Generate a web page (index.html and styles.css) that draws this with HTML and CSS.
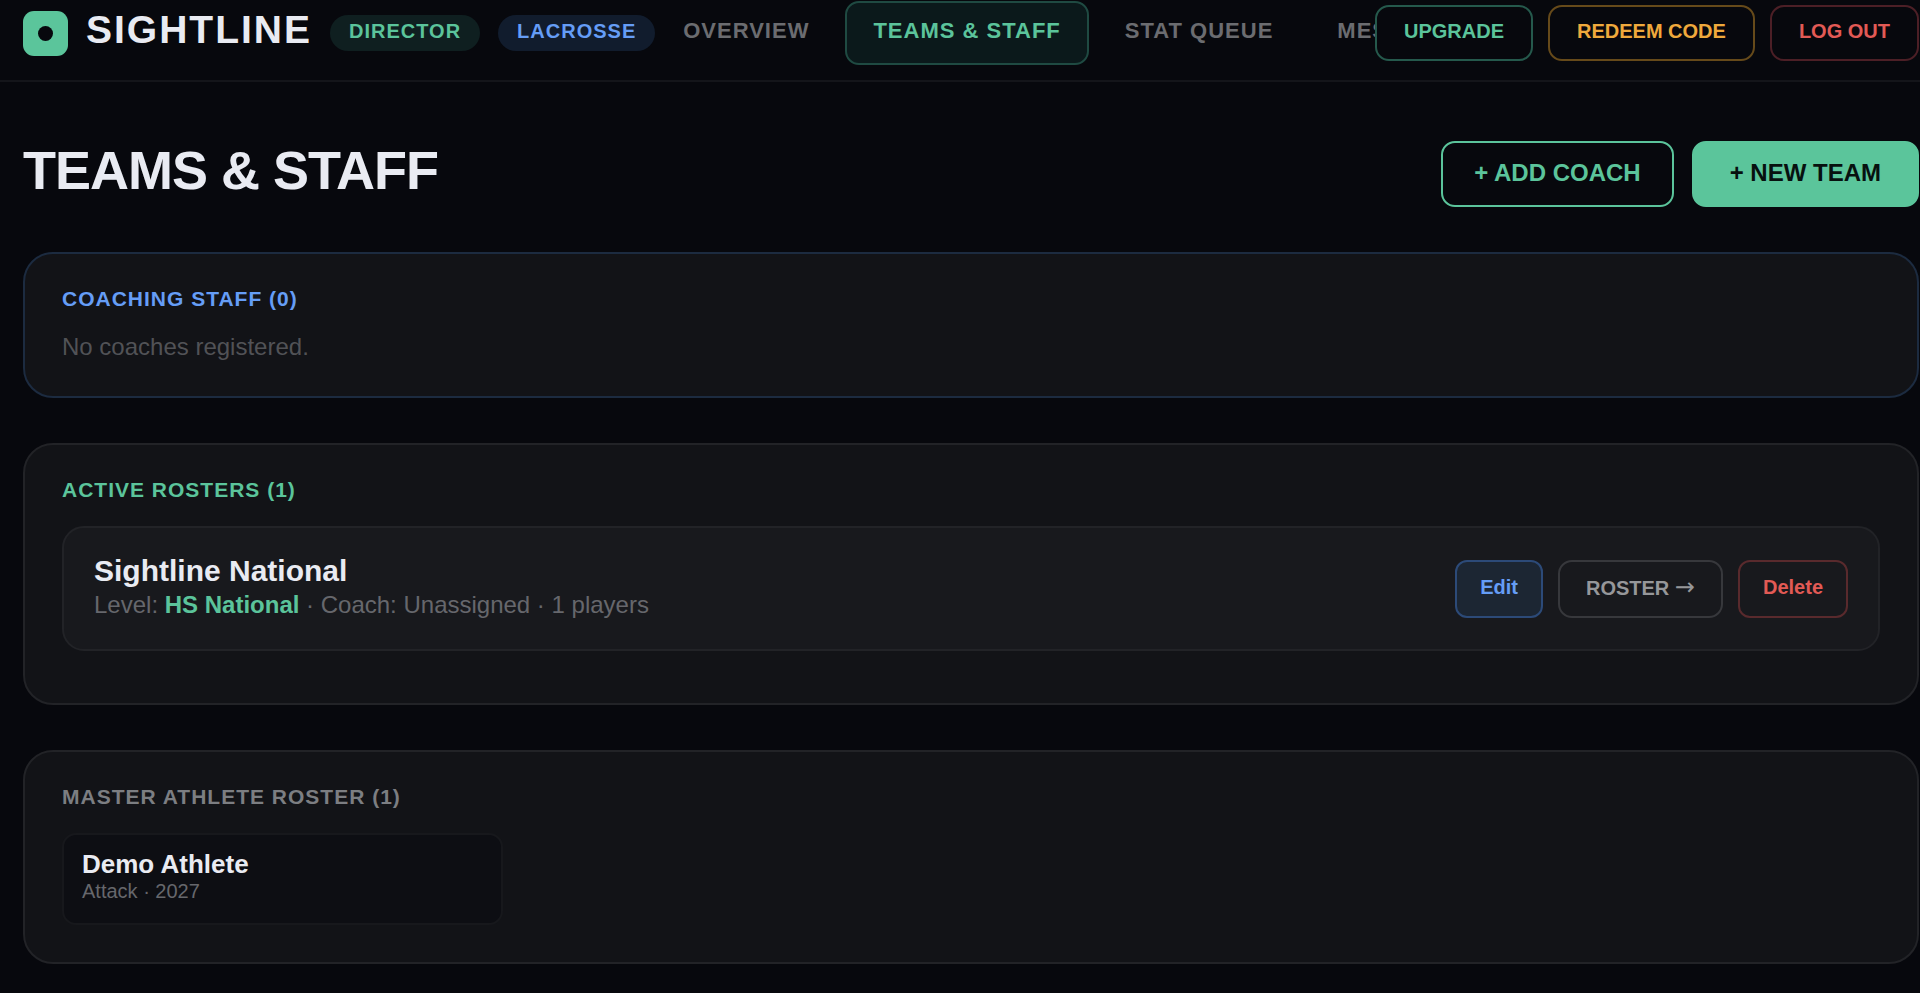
FILE: index.html
```html
<!DOCTYPE html>
<html lang="en">
  <head>
    <meta charset="utf-8" />
    <meta name="viewport" content="width=device-width, initial-scale=1" />
    <title>Sightline - Teams &amp; Staff</title>
    <link rel="stylesheet" href="styles.css">
  </head>

  <body>
    <header class="topbar">
      <div class="brand">
        <svg class="logo" viewBox="0 0 45 45" aria-hidden="true">
          <rect width="45" height="45" rx="11" fill="#5bc59b" />
          <circle cx="22.5" cy="22.5" r="7.5" fill="#07080d" />
        </svg>
        <span class="brand-name">SIGHTLINE</span>
        <span class="pill pill-green">DIRECTOR</span>
        <span class="pill pill-blue">LACROSSE</span>
      </div>
      <nav class="tabs">
        <a class="tab" href="#">OVERVIEW</a>
        <a class="tab active" href="#">TEAMS &amp; STAFF</a>
        <a class="tab" href="#">STAT QUEUE</a>
        <a class="tab" href="#">MESSAGES</a>
      </nav>
      <div class="account">
        <button class="btn btn-upgrade">UPGRADE</button>
        <button class="btn btn-redeem">REDEEM CODE</button>
        <button class="btn btn-logout">LOG OUT</button>
      </div>
    </header>

    <main class="main">
      <div class="page-head">
        <h1>TEAMS &amp; STAFF</h1>
        <div class="page-actions">
          <button class="btn btn-large btn-outline">+ ADD COACH</button>
          <button class="btn btn-large btn-solid">+ NEW TEAM</button>
        </div>
      </div>

      <section class="card card-staff">
        <h2 class="blue">COACHING STAFF (0)</h2>
        <p class="empty">No coaches registered.</p>
      </section>

      <section class="card">
        <h2 class="green">ACTIVE ROSTERS (1)</h2>
        <div class="team">
          <div class="team-info">
            <h3>Sightline National</h3>
            <p>Level: <strong>HS National</strong> · Coach: Unassigned · 1 players</p>
          </div>
          <div class="team-actions">
            <button class="btn btn-edit">Edit</button>
            <button class="btn btn-roster">ROSTER <span class="arrow">→</span></button>
            <button class="btn btn-delete">Delete</button>
          </div>
        </div>
      </section>

      <section class="card">
        <h2 class="grey">MASTER ATHLETE ROSTER (1)</h2>
        <div class="athletes">
          <div class="athlete">
            <h3>Demo Athlete</h3>
            <p>Attack · 2027</p>
          </div>
        </div>
      </section>
    </main>
  </body>
</html>
```
FILE: styles.css
```css
* {
  box-sizing: border-box;
}

body {
  margin: 0;
  background-color: #07080d;
  color: #e9ebf2;
  font-family: "Liberation Sans", Arial, Helvetica, sans-serif;
}

h1,
h2,
h3,
p {
  margin: 0;
}

/* top bar */
.topbar {
  display: flex;
  align-items: center;
  padding: 1px 1px 15px 23px;
  border-bottom: 2px solid #14151a;
}

.brand {
  display: flex;
  align-items: center;
  gap: 18px;
  flex-shrink: 0;
}

.logo {
  width: 45px;
  height: 45px;
}

.brand-name {
  padding-bottom: 7px;
  font-size: 39px;
  line-height: 40px;
  font-weight: bold;
  letter-spacing: 2px;
}

.pill {
  padding: 6px 19px 10px;
  border-radius: 18px;
  font-size: 20px;
  line-height: 20px;
  font-weight: bold;
  letter-spacing: 1px;
}

.pill-green {
  background-color: #0f1f20;
  color: #5bc49b;
}

.pill-blue {
  background-color: #111c2d;
  color: #659df6;
}

.tabs {
  display: flex;
  gap: 8px;
  flex: 1;
  min-width: 0;
  overflow: hidden;
}

.tab {
  flex-shrink: 0;
  padding: 17px 26px 21px;
  border: 2px solid transparent;
  border-radius: 14px;
  color: #6b6c70;
  font-size: 22px;
  line-height: 22px;
  font-weight: bold;
  letter-spacing: 1px;
  text-decoration: none;
}

.tab.active {
  background-color: #0b191b;
  border-color: #1f4a42;
  color: #5bc49b;
}

.account {
  display: flex;
  gap: 15px;
  flex-shrink: 0;
}

/* buttons */
.btn {
  padding: 14px 27px 18px;
  background-color: transparent;
  border: 2px solid;
  border-radius: 14px;
  font-family: inherit;
  font-size: 20px;
  line-height: 20px;
  font-weight: bold;
  white-space: nowrap;
  cursor: pointer;
}

.btn-upgrade {
  border-color: #25594c;
  color: #5bc49b;
}

.btn-redeem {
  border-color: #664a1a;
  color: #efa93c;
}

.btn-logout {
  border-color: #4c1f26;
  color: #e25a55;
}

.btn-large {
  padding: 18px 31px 20px;
  font-size: 24px;
  line-height: 24px;
}

.btn-outline {
  border-color: #5bc49b;
  color: #5bc49b;
}

.btn-solid {
  padding-left: 36px;
  padding-right: 36px;
  background-color: #5bc59b;
  border-color: #5bc59b;
  color: #07110f;
}

.btn-edit,
.btn-delete {
  padding: 15px 23px 19px;
  border-radius: 12px;
}

.btn-edit {
  background-color: #1c2633;
  border-color: #2c4a78;
  color: #659df6;
}

.btn-roster {
  padding: 16px 26px 18px;
  border-color: #37383c;
  color: #96979a;
}

.arrow {
  font-family: "DejaVu Sans", sans-serif;
  font-size: 24px;
  font-weight: normal;
  line-height: 0;
}

.btn-delete {
  border-color: #592a2d;
  color: #e25a55;
}

/* page */
.main {
  padding: 59px 1px 29px 23px;
}

.page-head {
  display: flex;
  align-items: center;
  justify-content: space-between;
  margin-bottom: 45px;
}

.page-head h1 {
  padding-bottom: 9px;
  font-size: 54px;
  line-height: 54px;
  letter-spacing: -1px;
}

.page-actions {
  display: flex;
  gap: 18px;
}

.card {
  margin-bottom: 45px;
  padding: 35px 37px 37px;
  background-color: #121317;
  border: 2px solid #222327;
  border-radius: 30px;
}

.card:last-child {
  margin-bottom: 0;
}

.card-staff {
  border-color: #1c2b40;
}

.card h2 {
  margin-bottom: 26px;
  font-size: 21px;
  line-height: 20px;
  letter-spacing: 1px;
}

.blue {
  color: #659df6;
}

.green {
  color: #5bc49b;
}

.grey {
  color: #7c7e82;
}

.empty {
  color: #515256;
  font-size: 24px;
  line-height: 24px;
}

.team {
  display: flex;
  align-items: center;
  justify-content: space-between;
  margin-bottom: 15px;
  padding: 25px 30px;
  background-color: #18191d;
  border: 2px solid #222327;
  border-radius: 22px;
}

.team-info {
  padding-bottom: 3px;
}

.team h3 {
  font-size: 30px;
  line-height: 36px;
}

.team p {
  color: #66676c;
  font-size: 24px;
  line-height: 32px;
}

.team strong {
  color: #5bc49b;
}

.team-actions {
  display: flex;
  gap: 15px;
}

/* athlete tiles */
.athletes {
  display: grid;
  grid-template-columns: repeat(4, 1fr);
  gap: 18px;
}

.athlete {
  padding: 14px 18px 20px;
  background-color: #0d0e13;
  border: 2px solid #17181c;
  border-radius: 14px;
}

.athlete h3 {
  font-size: 26px;
  line-height: 30px;
}

.athlete p {
  color: #66676c;
  font-size: 20px;
  line-height: 24px;
}
```
